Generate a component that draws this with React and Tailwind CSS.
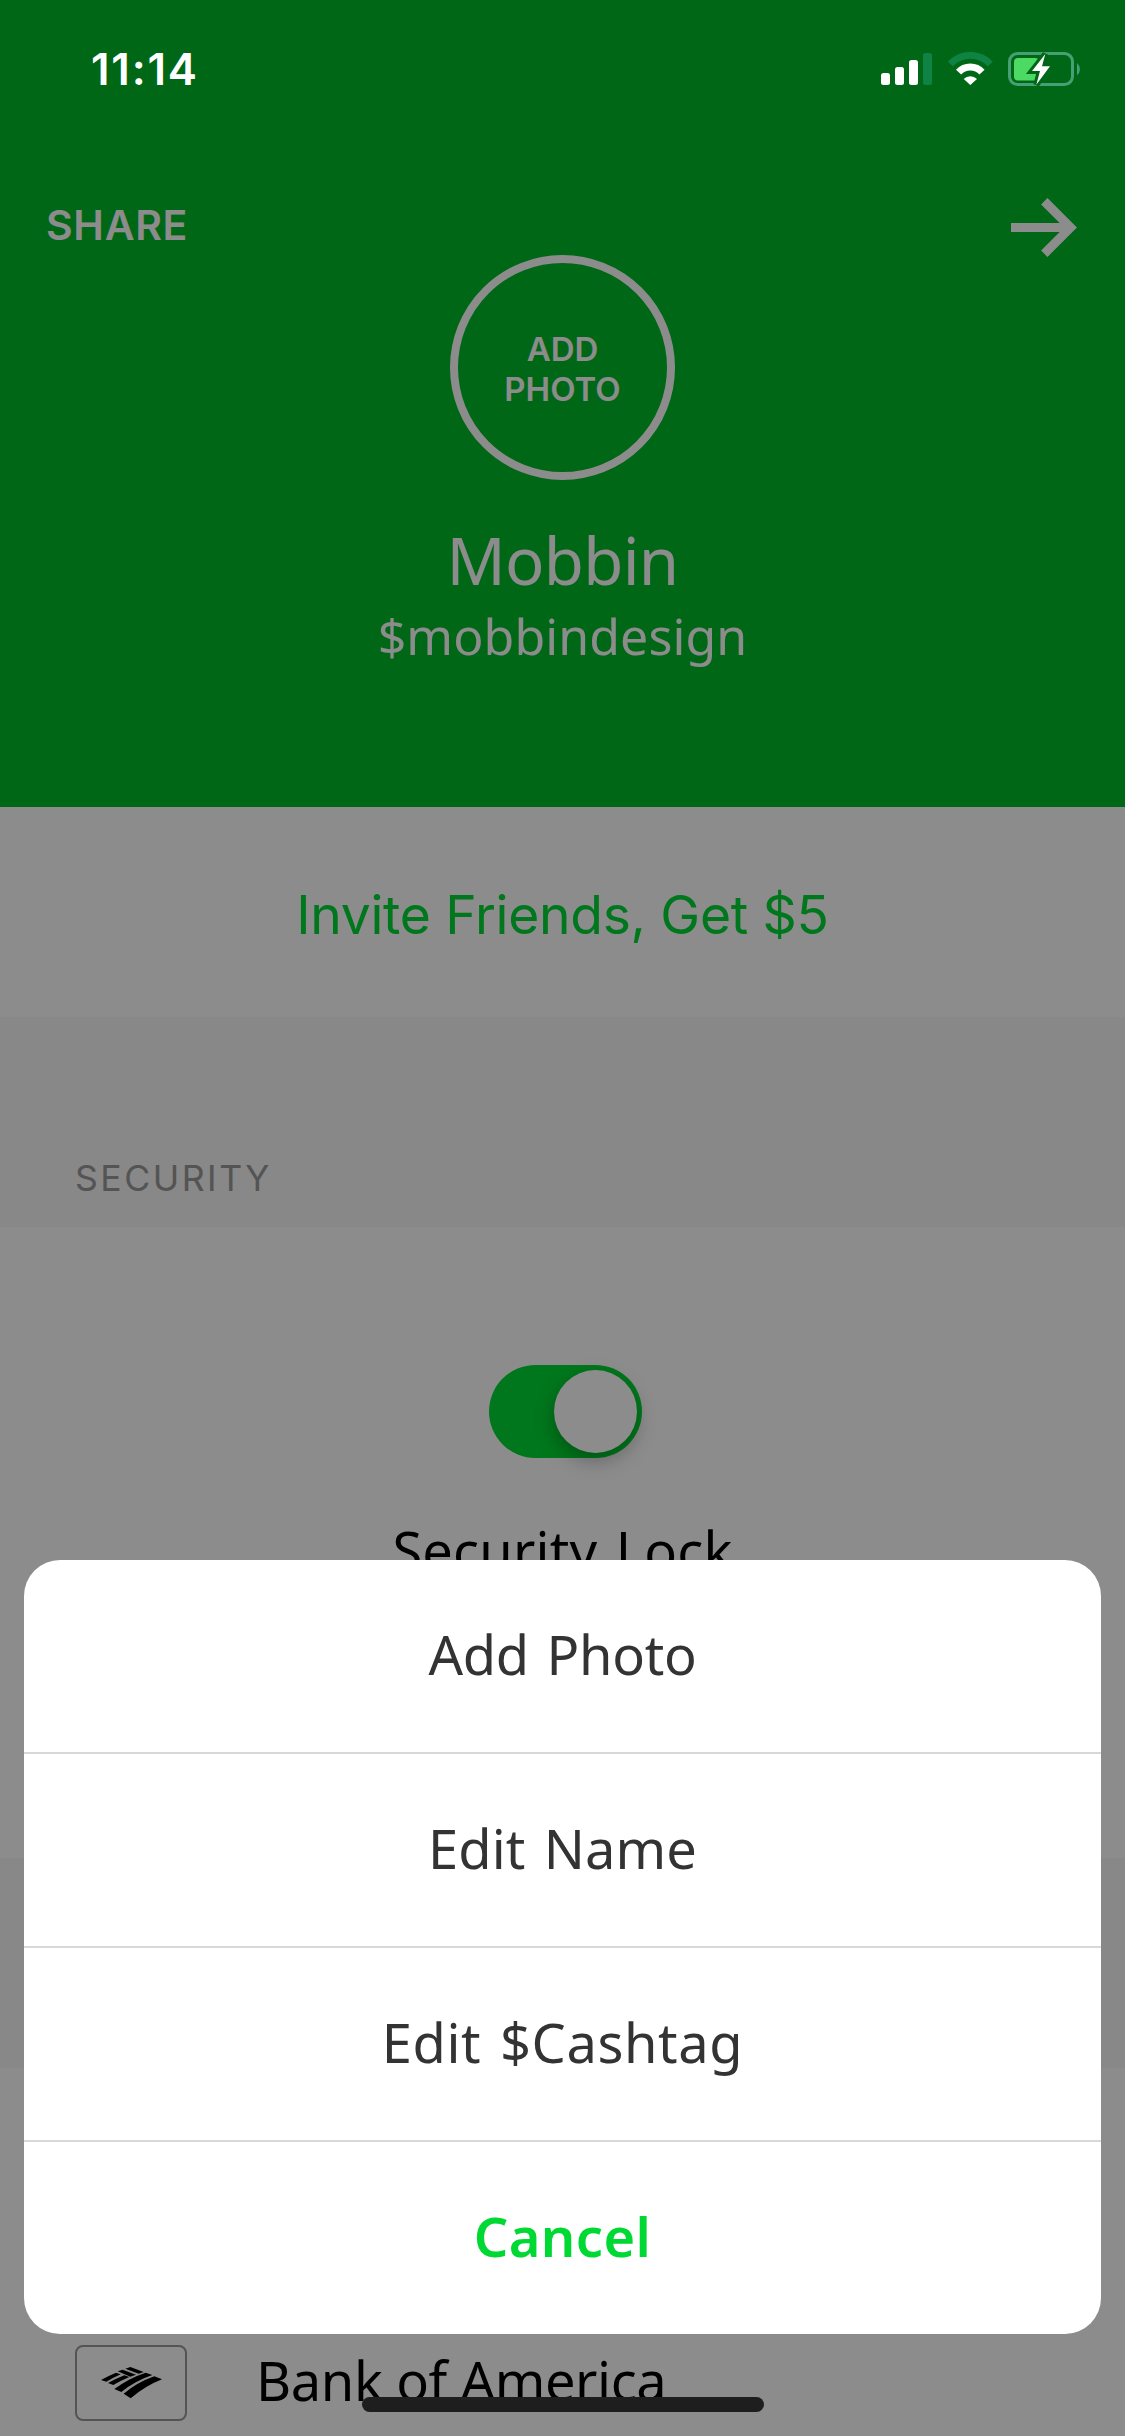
import React from 'react';

const SHEET_ACTIONS = ['Add Photo', 'Edit Name', 'Edit $Cashtag'];

const ACTION_TRACKING = {
  'Add Photo': 'tracking-[-0.3px]',
  'Edit Name': 'tracking-[0.1px]',
  'Edit $Cashtag': 'tracking-[0.6px]',
};

const SignalIcon = () => (
  <svg width="51" height="32" viewBox="0 0 51 32" className="mt-[53px] shrink-0">
    <rect x="0" y="20" width="9" height="12" rx="2.5" fill="#fff" />
    <rect x="14" y="14" width="9" height="18" rx="2.5" fill="#fff" />
    <rect x="28" y="7" width="9" height="25" rx="2.5" fill="#fff" />
    <rect x="42" y="0" width="9" height="32" rx="2.5" fill="#0f8344" />
  </svg>
);

const WifiIcon = () => (
  <svg width="45" height="33" viewBox="0 0 45 33" className="ml-[15.5px] mt-[52px] shrink-0">
    <path d="M2.4 12A27.3 27.3 0 0 1 42.3 12" fill="none" stroke="#0f8344" strokeWidth="6.8" />
    <path d="M10.6 20.1A15.8 15.8 0 0 1 34 20.1" fill="none" stroke="#fff" strokeWidth="7" />
    <path d="M15.7 27A9.3 9.3 0 0 1 29 27L22.3 33Z" fill="#fff" />
  </svg>
);

const BatteryIcon = () => (
  <svg width="73" height="34" viewBox="0 0 73 34" className="ml-[15.5px] mt-[52px] shrink-0">
    <rect x="1.5" y="1.5" width="63" height="31" rx="8" fill="none" stroke="#46a073" strokeWidth="3" />
    <path d="M69 11A8 8 0 0 1 69 23.3Z" fill="#46a073" />
    <rect x="6" y="6" width="25" height="22.5" rx="4" fill="#4cd964" />
    <path
      d="M37.3 2L24 19H32L28.3 32.7L42 14.3H34Z"
      fill="#006716"
      stroke="#006716"
      strokeWidth="6"
    />
    <path d="M37.3 2L24 19H32L28.3 32.7L42 14.3H34Z" fill="#fff" />
  </svg>
);

const ArrowIcon = () => (
  <svg width="66" height="59" viewBox="0 0 66 59" className="shrink-0">
    <path d="M0 29.5H59M33.3 3.2L59.6 29.5L33.3 55.8" fill="none" stroke="#fff" strokeWidth="9" />
  </svg>
);

const BankLogo = () => (
  <svg width="80" height="60" viewBox="0 0 240 180" fill="#000" className="mb-1.5 mr-0.5">
    <path d="M106 56L121 51L161 66L146 71Z" />
    <path d="M83 64L98 59L138 74L121 80Z" />
    <path d="M33 90Q56 77 78 68L92 73Q70 83 49 95Z" />
    <path d="M54 99Q78 86 103 76L118 81Q92 92 70 105Z" />
    <path d="M73 117Q118 84 167 68L187 75Q136 92 94 126Z" />
    <path d="M101 131Q142 97 193 79L216 88Q165 108 122 145Z" />
  </svg>
);

const StatusBar = () => (
  <div className="relative z-20 flex h-[198px] items-start justify-between pl-[91px] pr-[44px]">
    <span className="mt-12 font-['Inter',sans-serif] text-[43.8px] font-semibold leading-[44px] tracking-[1.8px] text-white">
      11:14
    </span>
    <div className="flex items-start">
      <SignalIcon />
      <WifiIcon />
      <BatteryIcon />
    </div>
  </div>
);

const ProfileHeader = () => (
  <header className="h-[807px] bg-[#00bc28] text-white">
    <StatusBar />
    <div className="flex h-[57px] items-start justify-between pl-[46px] pr-12">
      <button className="font-['Inter',sans-serif] text-[41px] font-semibold leading-[54px] tracking-[0.7px]">
        SHARE
      </button>
      <button aria-label="Next">
        <ArrowIcon />
      </button>
    </div>
    <div className="flex flex-col items-center">
      <button className="flex h-[225px] w-[225px] items-center justify-center rounded-full border-[8px] border-white font-['Inter',sans-serif] text-[33px] font-semibold leading-10">
        <span className="mt-[3px]">
          ADD
          <br />
          PHOTO
        </span>
      </button>
      <h1 className="mt-10 text-[65.3px] leading-[80px] tracking-[-0.7px]">Mobbin</h1>
      <p className="mt-1.5 text-[50px] leading-[60px] tracking-[0.1px]">$mobbindesign</p>
    </div>
  </header>
);

const Toggle = () => (
  <button
    role="switch"
    aria-checked="true"
    aria-label="Security Lock"
    className="ml-[6px] flex h-[93px] w-[153px] items-center justify-end rounded-full bg-[#00d933] pr-[5px]"
  >
    <span className="h-[83px] w-[83px] rounded-full bg-white shadow-[0_8px_20px_rgba(0,0,0,0.28)]" />
  </button>
);

const ActionSheet = () => (
  <div className="absolute left-6 right-6 top-[1560px] z-30 flex flex-col divide-y-2 divide-[#d8d8d8] overflow-hidden rounded-[36px] bg-white text-center text-[54.2px] text-[#333]">
    {SHEET_ACTIONS.map((action) => (
      <button
        key={action}
        className={`box-content h-[192px] leading-[188px] [word-spacing:4px] ${ACTION_TRACKING[action]}`}
      >
        <span className="block h-[192px]">{action}</span>
      </button>
    ))}
    <button className="h-[192px] font-semibold leading-[188px] tracking-[0.4px] text-[#00d933]">
      <span className="block h-[192px]">Cancel</span>
    </button>
  </div>
);

export default function App() {
  return (
    <div className="relative h-[2436px] w-[1125px] overflow-hidden bg-white font-['Noto_Sans',sans-serif] text-black">
      <ProfileHeader />

      <section className="h-[210px] text-center font-['Inter',sans-serif] text-[53.4px] leading-[216px] tracking-[-0.3px] text-[#00d933]">
        Invite Friends, Get $5
      </section>

      <section className="h-[210px] bg-[#f7f7f7] pl-[75px] pt-[132px]">
        <h2 className="font-['Inter',sans-serif] text-[35.6px] leading-[60px] tracking-[2.5px] text-[#999]">
          SECURITY
        </h2>
      </section>

      <section className="flex h-[631px] flex-col items-center pt-[138px]">
        <Toggle />
        <p className="mt-[51px] text-[54.2px] leading-[82px] tracking-[0.2px] [word-spacing:4px]">Security Lock</p>
      </section>

      <div className="h-[210px] bg-[#f7f7f7]" />

      <section className="flex items-start gap-[69px] pl-[75px] pt-[277px]">
        <div className="flex h-[76px] w-[112px] items-center justify-center rounded-lg border-2 border-[#999]">
          <BankLogo />
        </div>
        <p className="text-[54.2px] leading-[70px] tracking-[-0.4px]">Bank of America</p>
      </section>

      {/* Dimmed backdrop */}
      <div className="absolute inset-0 z-10 bg-black/45" />

      <ActionSheet />

      {/* Home indicator */}
      <div className="absolute bottom-6 left-1/2 z-40 h-[15px] w-[402px] -translate-x-1/2 rounded-full bg-[#1e1e1e]" />
    </div>
  );
}
